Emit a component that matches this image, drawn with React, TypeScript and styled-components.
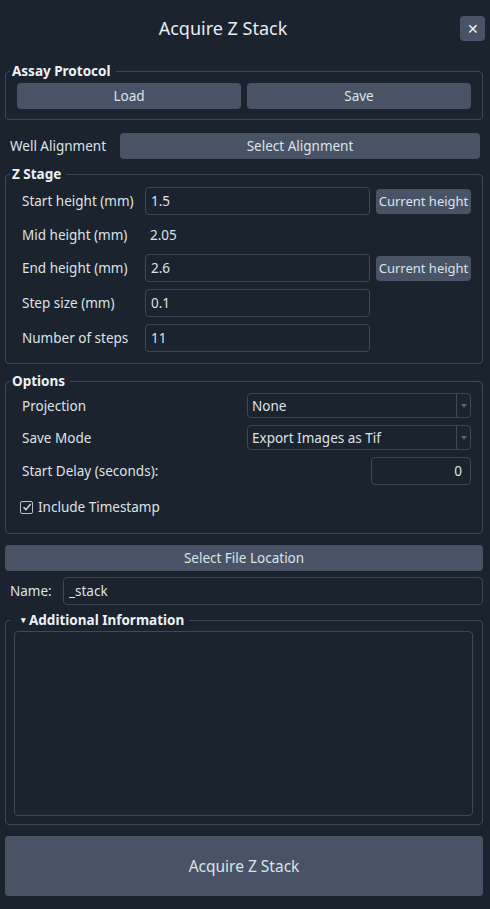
import styled, { createGlobalStyle } from "styled-components";

const GlobalStyle = createGlobalStyle`
  html, body {
    margin: 0;
    padding: 0;
    background: #1b232e;
  }
  body {
    font-family: "Noto Sans", "Liberation Sans", sans-serif;
    color: #dde2e8;
  }
`;

const AcquireZStack = () => {
  const zRows = [
    { label: "Start height (mm)", value: "1.5", current: true },
    { label: "Mid height (mm)", value: "2.05", readOnly: true },
    { label: "End height (mm)", value: "2.6", current: true },
    { label: "Step size (mm)", value: "0.1" },
    { label: "Number of steps", value: "11" },
  ];

  return (
    <Page>
      <GlobalStyle />
      <Header>
        <Title>Acquire Z Stack</Title>
        <CloseButton>✕</CloseButton>
      </Header>

      <Group>
        <Legend>Assay Protocol</Legend>
        <GroupBody $pad="4px 11px 10px 11px">
          <ButtonPair>
            <Button>Load</Button>
            <Button>Save</Button>
          </ButtonPair>
        </GroupBody>
      </Group>

      <AlignRow>
        <span>Well Alignment</span>
        <Button>Select Alignment</Button>
      </AlignRow>

      <Group>
        <Legend>Z Stage</Legend>
        <GroupBody $pad="5px 11px 11px 16px">
          <ZGrid>
            {zRows.map((row) => (
              <ZRow key={row.label} $short={row.readOnly}>
                <span>{row.label}</span>
                {row.readOnly ? (
                  <ReadValue>{row.value}</ReadValue>
                ) : (
                  <TextInput defaultValue={row.value} />
                )}
                {row.current ? <SmallButton>Current height</SmallButton> : <span />}
              </ZRow>
            ))}
          </ZGrid>
        </GroupBody>
      </Group>

      <Group $gap={10}>
        <Legend>Options</Legend>
        <GroupBody $pad="4px 11px 15px 16px">
          <OptionRow>
            <span>Projection</span>
            <Select>
              <span>None</span>
              <Arrow />
            </Select>
          </OptionRow>
          <OptionRow>
            <span>Save Mode</span>
            <Select>
              <span>Export Images as Tif</span>
              <Arrow />
            </Select>
          </OptionRow>
          <DelayRow>
            <span>Start Delay (seconds):</span>
            <DelayInput defaultValue="0" />
          </DelayRow>
          <CheckRow>
            <CheckBox>
              <svg width="10" height="10" viewBox="0 0 10 10">
                <path d="M1.5 5.2 L4 7.6 L8.6 2" fill="none" stroke="#dde2e8" strokeWidth="1.4" />
              </svg>
            </CheckBox>
            <span>Include Timestamp</span>
          </CheckRow>
        </GroupBody>
      </Group>

      <WideButton>Select File Location</WideButton>

      <NameRow>
        <span>Name:</span>
        <TextInput defaultValue="_stack" />
      </NameRow>

      <Group>
        <Legend $indent={11}>
          <Caret>▾</Caret>Additional Information
        </Legend>
        <GroupBody $pad="3px 9px 8px 8px">
          <Notes />
        </GroupBody>
      </Group>

      <AcquireButton>Acquire Z Stack</AcquireButton>
    </Page>
  );
};

export default AcquireZStack;

const Page = styled.div`
  width: 490px;
  box-sizing: border-box;
  padding: 0 7px 0 5px;
  font-size: 13.5px;
`;

const Header = styled.div`
  position: relative;
  height: 56px;
  display: flex;
  align-items: center;
  justify-content: center;
  margin-bottom: 8px;
`;

const Title = styled.h1`
  margin: 0 42px 0 0;
  font-size: 18px;
  font-weight: 400;
  color: #e8ecf0;
`;

const CloseButton = styled.button`
  position: absolute;
  right: -2px;
  top: 16px;
  width: 25px;
  height: 25px;
  border: none;
  border-radius: 4px;
  background: #485466;
  color: #f0f3f6;
  font-size: 14px;
  line-height: 1;
  padding: 0;
`;

const Group = styled.fieldset<{ $gap?: number }>`
  margin: ${(p) => p.$gap ?? 0}px 0 0 0;
  padding: 0;
  border: 1px solid #3d4958;
  border-radius: 4px;
`;

const GroupBody = styled.div<{ $pad: string }>`
  padding: ${(p) => p.$pad};
  display: flex;
  flex-direction: column;
`;

const Legend = styled.legend<{ $indent?: number }>`
  font-weight: 700;
  font-size: 13.5px;
  padding: 0 5px 0 ${(p) => p.$indent ?? 2}px;
  margin-left: 4px;
  color: #eef1f4;
  line-height: 15px;
`;

const Caret = styled.span`
  font-size: 9px;
  margin-right: 3px;
  vertical-align: 2px;
`;

const Button = styled.button`
  height: 26px;
  border: none;
  border-radius: 4px;
  background: #485466;
  color: #dde2e8;
  font-family: inherit;
  font-size: 13.5px;
  padding: 0;
`;

const ButtonPair = styled.div`
  display: grid;
  grid-template-columns: 1fr 1fr;
  gap: 6px;
`;

const AlignRow = styled.div`
  display: grid;
  grid-template-columns: 110px 1fr;
  align-items: center;
  padding: 13px 3px 8px 5px;
`;

const ZGrid = styled.div`
  display: flex;
  flex-direction: column;
  gap: 7px;
`;

const ZRow = styled.div<{ $short?: boolean }>`
  display: grid;
  grid-template-columns: 123px 225px 101px;
  align-items: center;
  height: ${(p) => (p.$short ? 25 : 28)}px;
`;

const TextInput = styled.input`
  height: 28px;
  box-sizing: border-box;
  border: 1px solid #3d4958;
  border-radius: 4px;
  background: #1b232e;
  color: #dde2e8;
  font-family: inherit;
  font-size: 13.5px;
  padding: 0 5px;
  width: 100%;
  outline: none;
`;

const ReadValue = styled.span`
  padding-left: 5px;
`;

const SmallButton = styled(Button)`
  height: 25px;
  margin-left: 6px;
  font-size: 13px;
  white-space: nowrap;
  overflow: visible;
`;

const OptionRow = styled.div`
  display: grid;
  grid-template-columns: 1fr 224px;
  align-items: center;
  height: 25px;
  margin-bottom: 7px;
`;

const Select = styled.div`
  height: 25px;
  box-sizing: border-box;
  border: 1px solid #3d4958;
  border-radius: 4px;
  display: flex;
  align-items: center;
  padding-left: 4px;
  justify-content: space-between;
`;

const Arrow = styled.span`
  align-self: stretch;
  width: 13px;
  border-left: 1px solid #3d4958;
  display: flex;
  align-items: center;
  justify-content: center;
  &::after {
    content: "";
    border-left: 3.5px solid transparent;
    border-right: 3.5px solid transparent;
    border-top: 4px solid #5d6878;
  }
`;

const DelayRow = styled.div`
  display: flex;
  justify-content: space-between;
  align-items: center;
  height: 28px;
`;

const DelayInput = styled(TextInput)`
  width: 100px;
  text-align: right;
  padding-right: 8px;
`;

const CheckRow = styled.div`
  display: flex;
  align-items: center;
  gap: 5px;
  margin: 11px 0 0 -2px;
  height: 22px;
`;

const CheckBox = styled.span`
  width: 11px;
  height: 11px;
  border: 1px solid #b8c0ca;
  border-radius: 2px;
  display: flex;
  align-items: center;
  justify-content: center;
`;

const WideButton = styled(Button)`
  display: block;
  width: 100%;
  margin-top: 11px;
`;

const NameRow = styled.div`
  display: grid;
  grid-template-columns: 53px 1fr;
  align-items: center;
  padding: 6px 0 7px 5px;
`;

const Notes = styled.div`
  height: 185px;
  box-sizing: border-box;
  border: 1px solid #3d4958;
  border-radius: 4px;
`;

const AcquireButton = styled(Button)`
  display: block;
  width: 100%;
  height: 60px;
  margin-top: 11px;
  font-size: 15.5px;
`;
